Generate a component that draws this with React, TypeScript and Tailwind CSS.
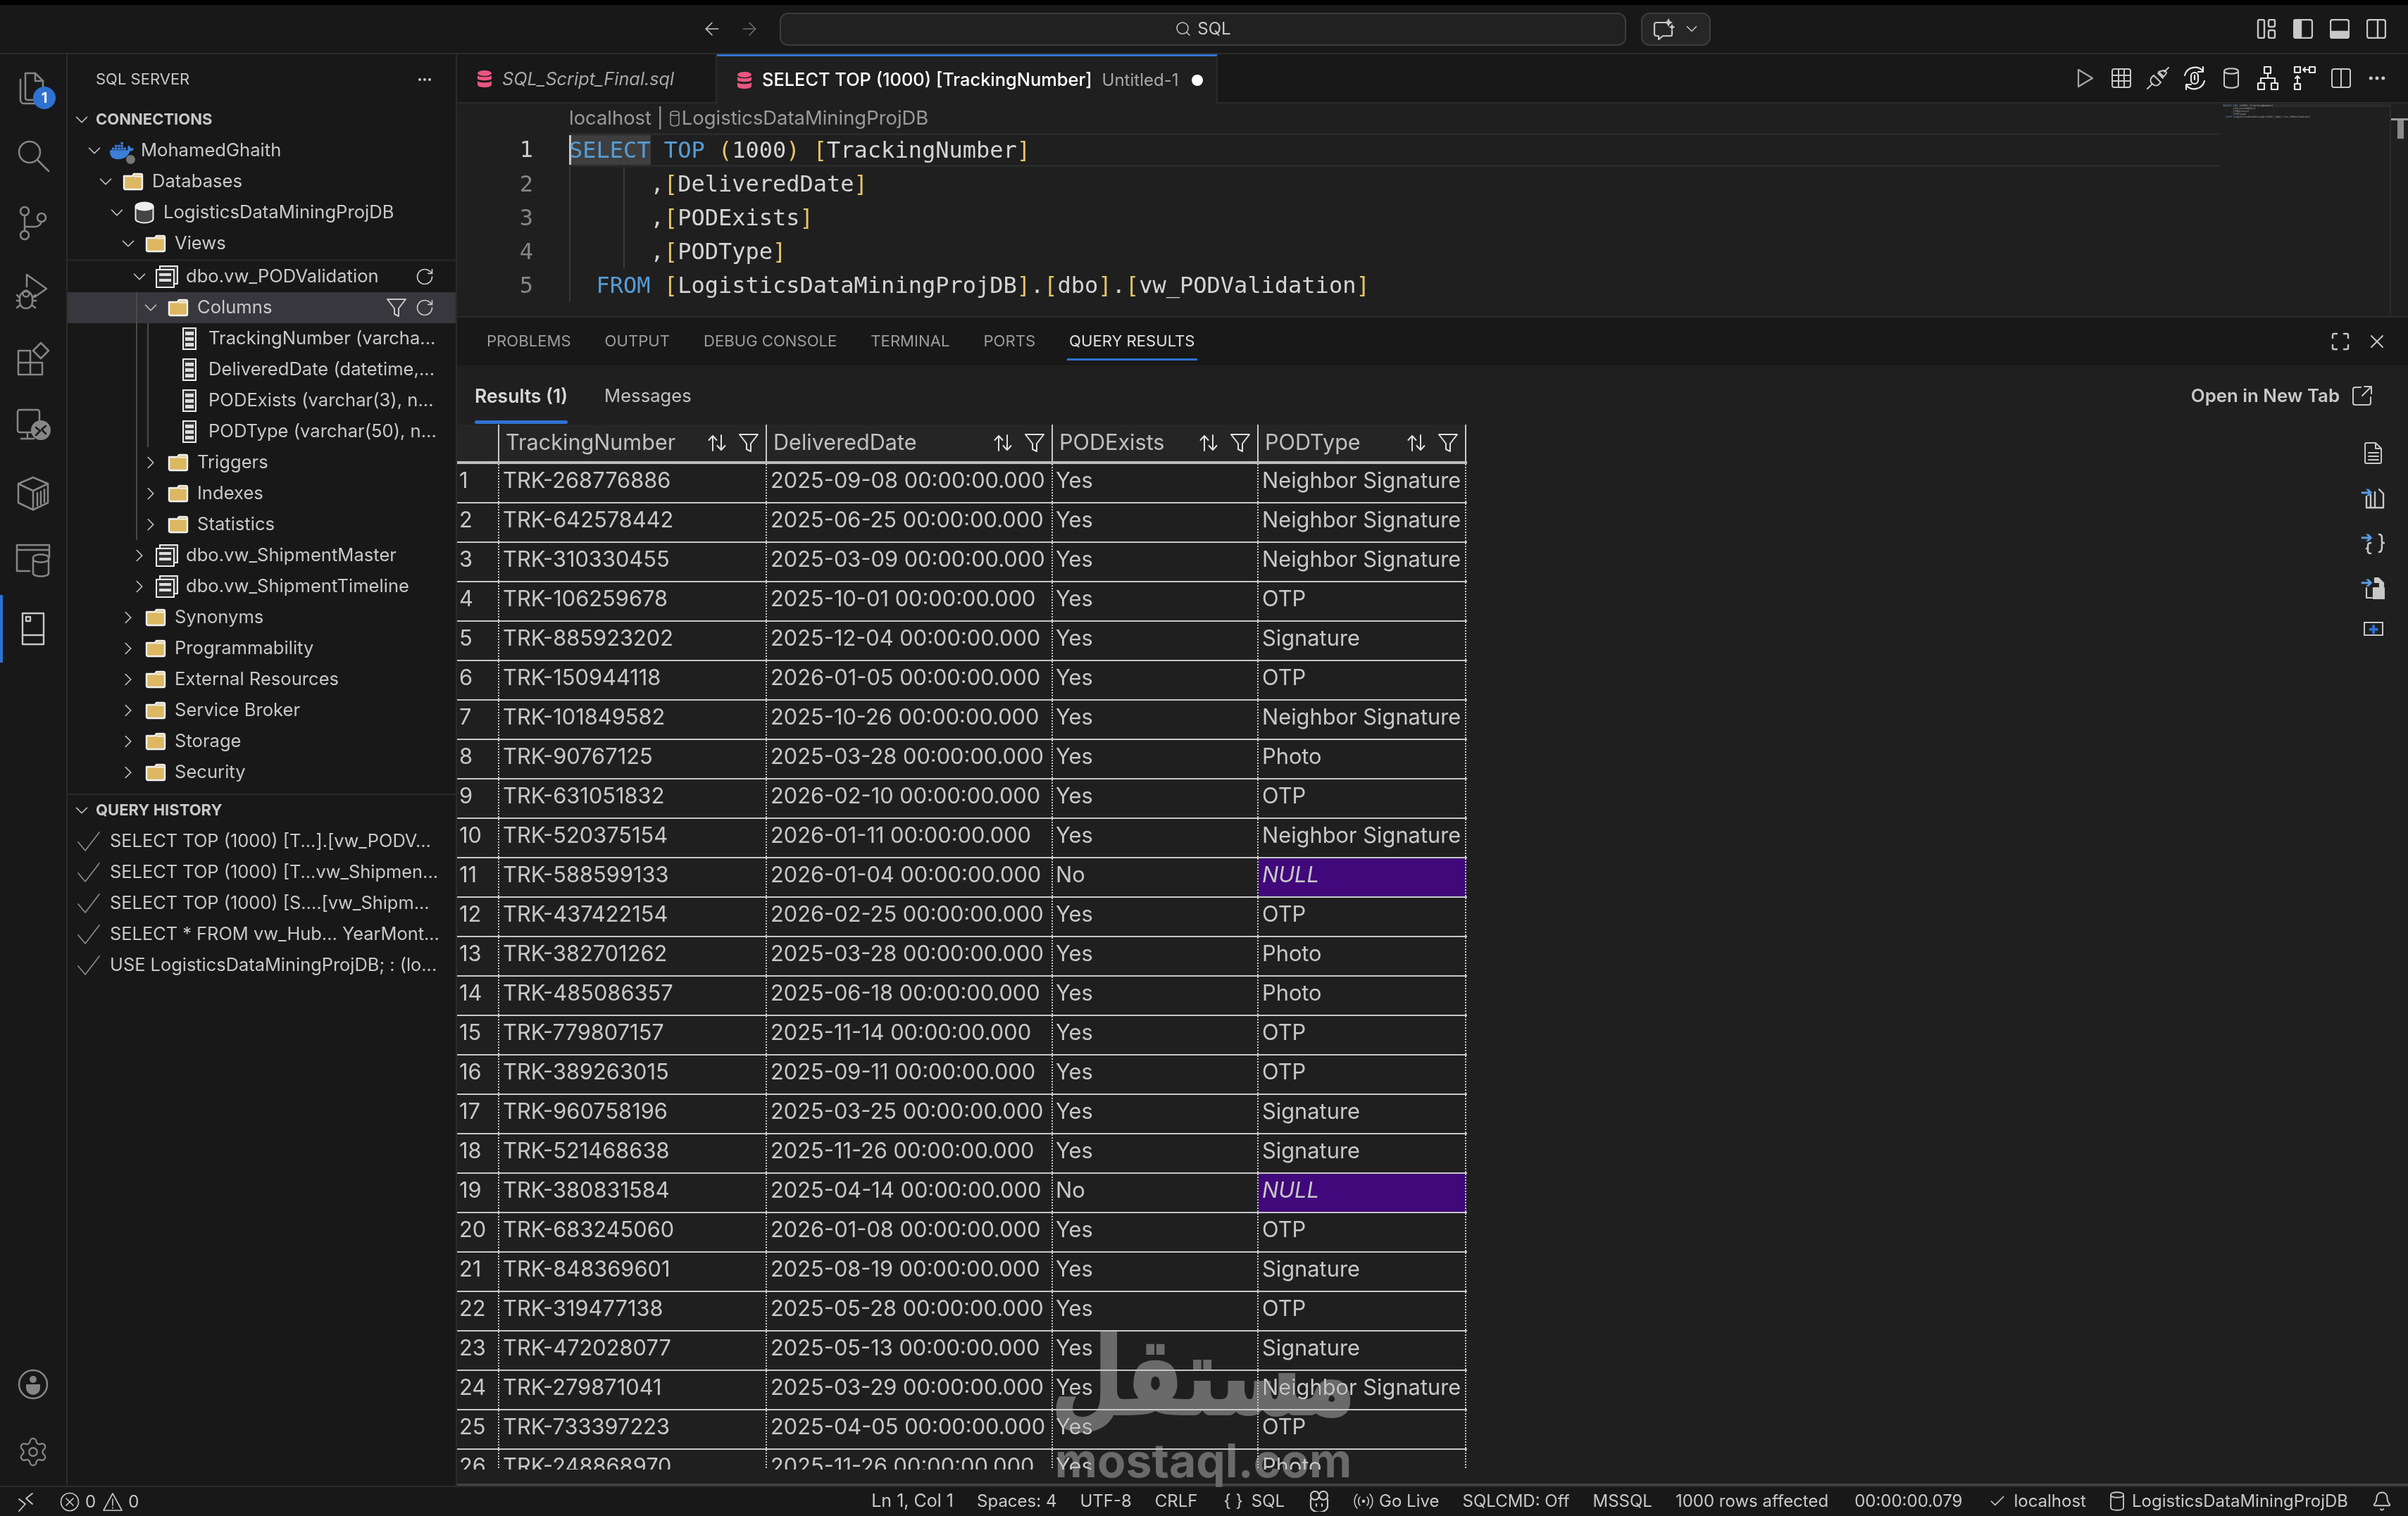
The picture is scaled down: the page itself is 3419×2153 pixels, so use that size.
import { ChevronDown, ChevronRight, Check, X, MoreHorizontal, ArrowLeft, ArrowRight, Search, RotateCw, Bell, Settings } from "lucide-react";
import { SiDocker } from "react-icons/si";
import type { ReactNode } from "react";

function Svg({
  w = 28,
  h = 28,
  vb,
  sw = 2.4,
  className = "",
  children,
}: {
  w?: number;
  h?: number;
  vb?: string;
  sw?: number;
  className?: string;
  children: ReactNode;
}) {
  return (
    <svg
      width={w}
      height={h}
      viewBox={vb ?? `0 0 ${w} ${h}`}
      fill="none"
      stroke="currentColor"
      strokeWidth={sw}
      strokeLinecap="round"
      strokeLinejoin="round"
      className={`shrink-0 ${className}`}
    >
      {children}
    </svg>
  );
}

function Funnel({ size = 28 }: { size?: number }) {
  return (
    <Svg w={size} h={size} vb="0 0 28 28" sw={2}>
      <path d="M1 2h26L17 15v11l-6-3v-8Z" />
    </Svg>
  );
}

function SortIcon() {
  return (
    <Svg w={26} h={26} sw={2}>
      <path d="M7 24V3M1.5 9 7 3l5.5 6M19 2v21M13.5 17l5.5 6 5.5-6" />
    </Svg>
  );
}

function Folder() {
  return (
    <svg width="30" height="26" viewBox="0 0 30 26" className="shrink-0">
      <path d="M2 5h12l2-3h10a2 2 0 0 1 2 2v18a2 2 0 0 1-2 2H4a2 2 0 0 1-2-2Z" fill="#dcb862" stroke="#f2f2f2" strokeWidth="2.4" strokeLinejoin="round" />
      <path d="M16 5.5h11" stroke="#f2f2f2" strokeWidth="2" />
    </svg>
  );
}

function DbIcon() {
  return (
    <svg width="28" height="32" viewBox="0 0 28 32" className="shrink-0">
      <path d="M1.5 7v18c0 3 5.5 5.5 12.5 5.5S26.500 28 26.500 25V7" fill="#444" stroke="#f0f0f0" strokeWidth="2" />
      <ellipse cx="14" cy="7" rx="12.500" ry="5.500" fill="#eee" stroke="#f0f0f0" strokeWidth="2" />
    </svg>
  );
}

function ViewIcon() {
  return (
    <svg width="32" height="32" viewBox="0 0 32 32" fill="none" className="shrink-0">
      <rect x="6" y="1" width="25" height="25" fill="#444" stroke="#eee" strokeWidth="2" />
      <rect x="1" y="6" width="25" height="25" fill="#2a2a2a" stroke="#eee" strokeWidth="2" />
      <rect x="5" y="11" width="17" height="4" fill="#ddd" />
      <rect x="5" y="19" width="17" height="4" fill="#ddd" />
      <rect x="5" y="15" width="17" height="4" fill="#333" />
    </svg>
  );
}

function ColumnIcon() {
  return (
    <svg width="20" height="32" viewBox="0 0 20 32" className="shrink-0">
      <rect x="1" y="1" width="18" height="30" fill="#333" stroke="#f0f0f0" strokeWidth="2" />
      <rect x="4" y="6" width="12" height="5" fill="#ddd" />
      <rect x="4" y="14" width="12" height="5" fill="#ddd" />
      <rect x="4" y="22" width="12" height="5" fill="#ddd" />
    </svg>
  );
}

function Whale() {
  return (
    <span className="relative flex h-[32px] w-[34px] shrink-0 items-center justify-center">
      <SiDocker size={34} className="text-[#3b7fd9]" />
      <span className="absolute bottom-[-3px] right-[-2px] h-[13px] w-[13px] rounded-full bg-[#777]" />
    </span>
  );
}

type Row = {
  label: string;
  level: number;
  open?: boolean;
  icon: ReactNode;
  actions?: "refresh" | "both";
  g1?: boolean;
  g2?: boolean;
};

const sticky: Row[] = [
  { label: "MohamedGhaith", level: 0, open: true, icon: <Whale /> },
  { label: "Databases", level: 1, open: true, icon: <Folder /> },
  { label: "LogisticsDataMiningProjDB", level: 2, open: true, icon: <DbIcon /> },
  { label: "Views", level: 3, open: true, icon: <Folder /> },
];

const treeRows: Row[] = [
  { label: "dbo.vw_PODValidation", level: 4, open: true, icon: <ViewIcon />, actions: "refresh" },
  { label: "Columns", level: 5, open: true, icon: <Folder />, actions: "both", g1: true },
  { label: "TrackingNumber (varcha...", level: 6, icon: <ColumnIcon />, g1: true, g2: true },
  { label: "DeliveredDate (datetime,...", level: 6, icon: <ColumnIcon />, g1: true, g2: true },
  { label: "PODExists (varchar(3), n...", level: 6, icon: <ColumnIcon />, g1: true, g2: true },
  { label: "PODType (varchar(50), n...", level: 6, icon: <ColumnIcon />, g1: true, g2: true },
  { label: "Triggers", level: 5, open: false, icon: <Folder />, g1: true },
  { label: "Indexes", level: 5, open: false, icon: <Folder />, g1: true },
  { label: "Statistics", level: 5, open: false, icon: <Folder />, g1: true },
  { label: "dbo.vw_ShipmentMaster", level: 4, open: false, icon: <ViewIcon /> },
  { label: "dbo.vw_ShipmentTimeline", level: 4, open: false, icon: <ViewIcon /> },
  { label: "Synonyms", level: 3, open: false, icon: <Folder /> },
  { label: "Programmability", level: 3, open: false, icon: <Folder /> },
  { label: "External Resources", level: 3, open: false, icon: <Folder /> },
  { label: "Service Broker", level: 3, open: false, icon: <Folder /> },
  { label: "Storage", level: 3, open: false, icon: <Folder /> },
  { label: "Security", level: 3, open: false, icon: <Folder /> },
];

const history = [
  "SELECT TOP (1000) [T...].[vw_PODV...",
  "SELECT TOP (1000) [T...vw_Shipmen...",
  "SELECT TOP (1000) [S....[vw_Shipm...",
  "SELECT * FROM vw_Hub... YearMont...",
  "USE LogisticsDataMiningProjDB; : (lo...",
];

function TreeRow({ row }: { row: Row }) {
  return (
    <div
      className={`relative flex h-[44px] items-center text-[25.6px] text-[#c8c8c8] ${row.label === "Columns" ? "bg-[#37373d]" : ""}`}
      style={{ paddingLeft: 22 + 16 * row.level }}
    >
      {row.g1 && <span className="absolute bottom-0 left-[97px] top-0 w-[2px] bg-[#4a4a4a]" />}
      {row.g2 && <span className="absolute bottom-0 left-[113px] top-0 w-[2px] bg-[#4a4a4a]" />}
      <span className="flex w-[32px] shrink-0 justify-center text-[#c8c8c8]">
        {row.open === true && <ChevronDown size={30} strokeWidth={1.3} />}
        {row.open === false && <ChevronRight size={30} strokeWidth={1.3} />}
      </span>
      <span className="flex w-[46px] shrink-0 justify-center">{row.icon}</span>
      <span className="ml-[4px] whitespace-nowrap pb-[1px]">{row.label}</span>
      {row.actions && (
        <span className="absolute right-[30px] flex items-center gap-[12px] text-[#c8c8c8]">
          {row.actions === "both" && <Funnel />}
          <RotateCw size={28} strokeWidth={1.4} />
        </span>
      )}
    </div>
  );
}

function SectionHeader({ label }: { label: string }) {
  return (
    <div className="flex h-[44px] items-center pl-[4px] text-[22px] font-bold text-[#c8c8c8]">
      <span className="flex w-[32px] justify-center">
        <ChevronDown size={30} strokeWidth={1.3} />
      </span>
      <span className="ml-[4px] pb-[1px]">{label}</span>
    </div>
  );
}

const activityTop: ReactNode[] = [
  <span className="relative block h-[52px] w-[48px]">
    <Svg w={48} h={52} sw={2.5}>
      <path d="M13 5h14l11 11v24a3 3 0 0 1-3 3H16a3 3 0 0 1-3-3Z" />
      <path d="M27 5v11h11M6 14v29a5 5 0 0 0 5 5h20" />
    </Svg>
    <span className="absolute left-[24px] top-[24px] flex h-[32px] w-[32px] items-center justify-center rounded-full bg-[#2f72d2] text-[20px] font-bold text-white">1</span>
  </span>,
  <Svg w={48} h={48} sw={2.5}>
    <circle cx="19" cy="19" r="15" />
    <path d="M30 30l16 16" />
  </Svg>,
  <Svg w={48} h={52} sw={2.5}>
    <circle cx="12" cy="9" r="6" />
    <circle cx="12" cy="43" r="6" />
    <circle cx="36" cy="18" r="6" />
    <path d="M12 15v22M12 31h14a10 10 0 0 0 10-7" />
  </Svg>,
  <Svg w={48} h={52} sw={2.5}>
    <path d="M15 20V3l28 20-17 12" />
    <circle cx="14" cy="30" r="4.500" />
    <path d="M5 36a9 9 0 0 1 18 0v6a9 9 0 0 1-18 0ZM1 32l4 4M27 32l-4 4M0 40h5M23 40h5M1 50l5-4M27 50l-5-4" />
  </Svg>,
  <Svg w={48} h={50} sw={2.5}>
    <path d="M3 14h17v17H3zM3 31h17v17H3zM20 31h17v17H20z" />
    <path d="M35 3l11 11-11 11-11-11Z" />
  </Svg>,
  <Svg w={50} h={52} sw={2.5}>
    <path d="M34 28V6a3 3 0 0 0-3-3H6a3 3 0 0 0-3 3v26a3 3 0 0 0 3 3h18M17 35v8M8 44h18" />
    <circle cx="36" cy="32" r="14" fill="#868686" stroke="none" />
    <path d="M29 28l6 5-6 6M43 26l-6 5 6 6" stroke="#181818" />
  </Svg>,
  <Svg w={48} h={50} sw={2.5}>
    <path d="M24 2l21 9v27L24 48 3 38V11Z" />
    <path d="M3 11l21 10 21-10M24 21v27M30 24v18M35 22v18M40 19v18" />
  </Svg>,
  <Svg w={50} h={50} sw={2.6}>
    <path d="M2 2h46v17M2 9h46M2 2v37h18" />
    <path d="M25 20v22c0 6 22 6 22 0V20c0-6-22-6-22 0ZM25 22c0 6 22 6 22 0" />
  </Svg>,
  <Svg w={34} h={48} sw={2.4} className="text-[#c8c8c8]">
    <rect x="2" y="2" width="30" height="44" />
    <path d="M2 33h30" />
    <rect x="7" y="7" width="6" height="6" />
  </Svg>,
];

function ActivityBar() {
  return (
    <div className="flex w-[96px] shrink-0 flex-col justify-between border-r-2 border-[#2b2b2b] text-[#868686]">
      <div className="flex flex-col">
        {activityTop.map((icon, i) => (
          <div key={i} className="relative flex h-[96px] items-center justify-center">
            {i === 8 && <span className="absolute bottom-0 left-0 top-0 w-[4px] bg-[#2f72d2]" />}
            {icon}
          </div>
        ))}
      </div>
      <div className="flex flex-col">
        <div className="flex h-[96px] items-center justify-center">
          <Svg w={44} h={44} sw={2.5}>
            <circle cx="22" cy="22" r="20" />
            <circle cx="22" cy="15" r="5" fill="currentColor" stroke="none" />
            <path d="M12 22h20v5a10 10 0 0 1-20 0Z" fill="currentColor" stroke="none" />
          </Svg>
        </div>
        <div className="flex h-[96px] items-center justify-center">
          <Settings size={46} strokeWidth={1.2} />
        </div>
      </div>
    </div>
  );
}

function Sidebar() {
  return (
    <div className="flex w-[553px] shrink-0 flex-col border-r-2 border-[#2b2b2b]">
      <div className="flex h-[71px] items-center justify-between pl-[40px] pr-[32px]">
        <span className="text-[22px] text-[#c8c8c8]">SQL SERVER</span>
        <MoreHorizontal size={24} className="text-[#c8c8c8]" />
      </div>
      <SectionHeader label="CONNECTIONS" />
      {sticky.map((r) => (
        <TreeRow key={r.label} row={r} />
      ))}
      <div className="h-[3px] bg-[#242424]" />
      {treeRows.map((r) => (
        <TreeRow key={r.label} row={r} />
      ))}
      <div className="mt-[8px] border-t-2 border-[#2b2b2b]">
        <SectionHeader label="QUERY HISTORY" />
      </div>
      {history.map((q) => (
        <div key={q} className="flex h-[44px] items-center pl-[12px] text-[25.4px] text-[#c8c8c8]">
          <span className="flex w-[36px] justify-center text-[#868686]">
            <Svg w={34} h={30} sw={1.8}>
              <path d="M2 16l10 12L32 2" />
            </Svg>
          </span>
          <span className="ml-[12px] whitespace-nowrap pb-[1px]">{q}</span>
        </div>
      ))}
    </div>
  );
}

function TitleBar() {
  return (
    <div className="flex h-[70px] shrink-0 items-center border-b-2 border-[#2b2b2b] bg-[#181818]">
      <div className="flex w-[1107px] shrink-0 items-center justify-end gap-[23px] pr-[28px]">
        <ArrowLeft size={30} strokeWidth={1.3} className="text-[#c8c8c8]" />
        <ArrowRight size={30} strokeWidth={1.3} className="text-[#6e6e6e]" />
      </div>
      <div className="flex h-[47px] w-[1202px] shrink-0 items-center justify-center gap-[8px] rounded-[12px] border-2 border-[#3c3c3c] bg-[#212121] text-[24px] text-[#c8c8c8]">
        <Search size={24} strokeWidth={1.4} />
        <span>SQL</span>
      </div>
      <div className="ml-[21px] flex h-[47px] w-[99px] shrink-0 items-center justify-between rounded-[12px] border-2 border-[#3c3c3c] bg-[#262626] pl-[14px] pr-[12px] text-[#c8c8c8]">
        <Svg w={34} h={32} sw={2.2}>
          <path d="M22 7H6a3 3 0 0 0-3 3v13a3 3 0 0 0 3 3h3v5l6-5h11a2 2 0 0 0 2-2v-6" />
          <path d="M23 1l2 4 4 2-4 2-2 4-2-4-4-2 4-2ZM28 9l1.500 3 3 1.500-3 1.500-1.500 3-1.500-3-3-1.500 3-1.500Z" fill="currentColor" stroke="none" />
        </Svg>
        <ChevronDown size={26} strokeWidth={1.4} />
      </div>
      <div className="flex flex-1 items-center justify-end gap-[24px] pr-[31px] text-[#c8c8c8]">
        <Svg>
          <rect x="2" y="1" width="9" height="26" rx="2" />
          <rect x="17" y="1" width="9" height="10" rx="2" />
          <rect x="17" y="16" width="9" height="11" rx="2" />
        </Svg>
        <Svg>
          <rect x="1" y="1" width="26" height="26" rx="3" />
          <path d="M4 1h7v26H4a3 3 0 0 1-3-3V4a3 3 0 0 1 3-3Z" fill="currentColor" />
        </Svg>
        <Svg>
          <rect x="1" y="1" width="26" height="26" rx="3" />
          <path d="M1 18h26v6a3 3 0 0 1-3 3H4a3 3 0 0 1-3-3Z" fill="currentColor" />
        </Svg>
        <Svg>
          <rect x="1" y="1" width="26" height="26" rx="3" />
          <path d="M16 1v26" />
        </Svg>
      </div>
    </div>
  );
}

function TabDb() {
  return (
    <svg width="22" height="24" viewBox="0 0 22 24" className="shrink-0">
      <ellipse cx="11" cy="4" rx="10" ry="4" fill="#e8567f" />
      <path d="M1 7c2 3 18 3 20 0v5c-2 3-18 3-20 0ZM1 15c2 3 18 3 20 0v5c0 3-5 4-10 4S1 23 1 20Z" fill="#e8567f" />
    </svg>
  );
}

function TabBar() {
  return (
    <div className="flex h-[70px] shrink-0 border-b-2 border-[#2b2b2b] bg-[#181818]">
      <div className="-mb-[2px] flex w-[369px] shrink-0 items-center border-r-2 border-[#2b2b2b] pl-[28px] pr-[10px]">
        <TabDb />
        <span className="ml-[14px] whitespace-nowrap text-[25.3px] italic text-[#a8a8a8]">SQL_Script_Final.sql</span>
      </div>
      <div className="-mb-[2px] flex w-[711px] shrink-0 items-center border-r-2 border-t-[3px] border-[#2b2b2b] border-t-[#2f72d2] bg-[#1f1f1f] pl-[28px]">
        <TabDb />
        <span className="ml-[14px] whitespace-nowrap text-[25.4px] font-medium text-white">SELECT TOP (1000) [TrackingNumber]</span>
        <span className="ml-[14px] whitespace-nowrap text-[24px] text-[#a8a8a8]">Untitled-1</span>
        <span className="ml-[19px] h-[16px] w-[16px] rounded-full bg-white" />
      </div>
      <div className="flex flex-1 items-center justify-end gap-[20px] pr-[29px] text-[#c8c8c8]">
        <Svg w={32} h={32} sw={2.2} className="text-[#a8a8a8]">
          <path d="M7 4l20 12L7 28Z" />
        </Svg>
        <Svg w={32} h={32} sw={2}>
          <rect x="3" y="3" width="26" height="26" rx="3" />
          <path d="M3 12h26M3 20h26M12 3v26M20 3v26" />
        </Svg>
        <Svg w={32} h={32} sw={2}>
          <path d="M1 31l7-7M31 1l-6 6M10 12l10 10-3 3a6 6 0 0 1-8 0l-2-2a6 6 0 0 1 0-8ZM16 9l7 7M24 5a4 4 0 0 1 4 4l-4 5-7-7Z" />
        </Svg>
        <Svg w={32} h={36} sw={2.2} className="text-[#e8e8e8]">
          <path d="M2 14A15 15 0 0 1 28 8M30 22A15 15 0 0 1 4 28M28 2v7h-7M4 34v-7h7" />
          <rect x="11" y="10" width="10" height="16" rx="5" />
          <path d="M16 14v6" />
        </Svg>
        <Svg w={32} h={32} sw={2}>
          <path d="M6 6v20c0 5 20 5 20 0V6M6 6c0-5 20-5 20 0s-20 5-20 0Z" />
        </Svg>
        <Svg w={32} h={36} sw={2.2} className="text-[#e8e8e8]">
          <rect x="11" y="2" width="9" height="9" />
          <rect x="2" y="25" width="9" height="9" />
          <rect x="21" y="25" width="9" height="9" />
          <path d="M16 11v7M6 25v-7h20v7" />
        </Svg>
        <Svg w={32} h={36} sw={2.2} className="text-[#e8e8e8]">
          <rect x="2" y="2" width="8" height="8" />
          <rect x="23" y="2" width="8" height="8" />
          <rect x="2" y="26" width="8" height="8" />
          <path d="M22 6h-8M17 3l-3 3 3 3M6 26V16M3 18l3-3 3 3" />
        </Svg>
        <Svg w={32} h={32} sw={2}>
          <rect x="3" y="3" width="26" height="26" rx="3" />
          <path d="M16 3v26" />
        </Svg>
        <MoreHorizontal size={30} strokeWidth={2} className="shrink-0 text-[#c8c8c8]" />
      </div>
    </div>
  );
}

function Code({ children, current = false }: { children: ReactNode; current?: boolean }) {
  return (
    <div className={`h-[48px] whitespace-pre ${current ? "border-y-[3px] border-[#2a2a2a] leading-[42px]" : "leading-[48px]"}`}>
      {children}
    </div>
  );
}

const B = ({ children }: { children: ReactNode }) => <span className="text-[#e6c468]">{children}</span>;
const K = ({ children }: { children: ReactNode }) => <span className="text-[#569cd6]">{children}</span>;

function Editor() {
  return (
    <div className="flex h-[302px] shrink-0 bg-[#1f1f1f] [font-family:'DejaVu_Sans_Mono',monospace]">
      <div className="w-[159px] shrink-0 pr-[51px] pt-[42px] text-right text-[32px] text-[#858585]">
        <div className="h-[48px] leading-[46px] text-[#cccccc]">1</div>
        <div className="h-[48px] leading-[48px]">2</div>
        <div className="h-[48px] leading-[48px]">3</div>
        <div className="h-[48px] leading-[48px]">4</div>
        <div className="h-[48px] leading-[48px]">5</div>
      </div>
      <div className="w-[2344px] shrink-0">
        <div className="flex h-[42px] items-center text-[27.4px] text-[#9a9a9a] [font-family:Inter,sans-serif]">
          <span>localhost |</span>
          <Svg w={16} h={24} sw={1.5} className="ml-[8px] mr-[2px]">
            <path d="M2 5v14c0 5 12 5 12 0V5M2 5c0-4 12-4 12 0s-12 4-12 0Z" />
          </Svg>
          <span>LogisticsDataMiningProjDB</span>
        </div>
        <div className="relative text-[32px] text-[#d4d4d4]">
          <span className="absolute left-0 top-0 h-[48px] w-[116px] bg-[#3e3e3e]" />
          <span className="absolute left-0 top-0 h-[48px] w-[3px] bg-[#c8c8c8]" />
          <span className="absolute left-0 top-[48px] h-[192px] w-[2px] bg-[#3a3a3a]" />
          <span className="absolute left-[77px] top-[48px] h-[144px] w-[2px] bg-[#3a3a3a]" />
          <div className="relative">
            <Code current>
              <K>SELECT</K> <K>TOP</K> <B>(</B>1000<B>)</B> <B>[</B>TrackingNumber<B>]</B>
            </Code>
            <Code>
              {"      ,"}
              <B>[</B>DeliveredDate<B>]</B>
            </Code>
            <Code>
              {"      ,"}
              <B>[</B>PODExists<B>]</B>
            </Code>
            <Code>
              {"      ,"}
              <B>[</B>PODType<B>]</B>
            </Code>
            <Code>
              {"  "}
              <K>FROM</K> <B>[</B>LogisticsDataMiningProjDB<B>]</B>.<B>[</B>dbo<B>]</B>.<B>[</B>vw_PODValidation<B>]</B>
            </Code>
          </div>
        </div>
      </div>
      <div className="w-[241px] shrink-0 whitespace-pre pl-[4px] pt-[1px] text-[3.500px] leading-[4px] text-[#a8a8a8]">
        <div className="bg-[#2a2a2a]">
          <span className="text-[#569cd6]">SELECT TOP</span> (1000) [TrackingNumber]
        </div>
        <div>{"      ,[DeliveredDate]"}</div>
        <div>{"      ,[PODExists]"}</div>
        <div>{"      ,[PODType]"}</div>
        <div>
          {"  "}
          <span className="text-[#569cd6]">FROM</span> [LogisticsDataMiningProjDB].[dbo].[vw_PODValidation]
        </div>
      </div>
      <div className="flex-1 border-l-2 border-[#2b2b2b]">
        <div className="mt-[21px] h-[3px] bg-[#9a9a9a]" />
        <div className="ml-[9px] h-[26px] w-[9px] bg-[#8a8a8a]" />
      </div>
    </div>
  );
}

type Pod = "Neighbor Signature" | "OTP" | "Signature" | "Photo" | "NULL";
const rows: [string, string, string, Pod][] = [
  ["TRK-268776886", "2025-09-08", "Yes", "Neighbor Signature"],
  ["TRK-642578442", "2025-06-25", "Yes", "Neighbor Signature"],
  ["TRK-310330455", "2025-03-09", "Yes", "Neighbor Signature"],
  ["TRK-106259678", "2025-10-01", "Yes", "OTP"],
  ["TRK-885923202", "2025-12-04", "Yes", "Signature"],
  ["TRK-150944118", "2026-01-05", "Yes", "OTP"],
  ["TRK-101849582", "2025-10-26", "Yes", "Neighbor Signature"],
  ["TRK-90767125", "2025-03-28", "Yes", "Photo"],
  ["TRK-631051832", "2026-02-10", "Yes", "OTP"],
  ["TRK-520375154", "2026-01-11", "Yes", "Neighbor Signature"],
  ["TRK-588599133", "2026-01-04", "No", "NULL"],
  ["TRK-437422154", "2026-02-25", "Yes", "OTP"],
  ["TRK-382701262", "2025-03-28", "Yes", "Photo"],
  ["TRK-485086357", "2025-06-18", "Yes", "Photo"],
  ["TRK-779807157", "2025-11-14", "Yes", "OTP"],
  ["TRK-389263015", "2025-09-11", "Yes", "OTP"],
  ["TRK-960758196", "2025-03-25", "Yes", "Signature"],
  ["TRK-521468638", "2025-11-26", "Yes", "Signature"],
  ["TRK-380831584", "2025-04-14", "No", "NULL"],
  ["TRK-683245060", "2026-01-08", "Yes", "OTP"],
  ["TRK-848369601", "2025-08-19", "Yes", "Signature"],
  ["TRK-319477138", "2025-05-28", "Yes", "OTP"],
  ["TRK-472028077", "2025-05-13", "Yes", "Signature"],
  ["TRK-279871041", "2025-03-29", "Yes", "Neighbor Signature"],
  ["TRK-733397223", "2025-04-05", "Yes", "OTP"],
  ["TRK-248868970", "2025-11-26", "Yes", "Photo"],
];

function HeaderCell({ label, width }: { label: string; width: string }) {
  return (
    <div className={`flex h-full shrink-0 items-center justify-between border-r-2 border-[#c8c8c8] pl-[9px] pr-[10px] ${width}`}>
      <span className="pb-[2px] text-[30.6px] text-[#c0c0c0]">{label}</span>
      <span className="flex items-center gap-[18px] text-[#e0e0e0]">
        <SortIcon />
        <Funnel />
      </span>
    </div>
  );
}

function ResultsTable() {
  return (
    <div className="h-[1484px] w-[1434px] shrink-0 overflow-hidden text-[30.8px] text-[#c8c8c8]">
      <div className="flex h-[56px] border-b-4 border-[#bdbdbd] bg-[#252526]">
        <div className="h-full w-[60px] shrink-0 border-r-2 border-[#c8c8c8]" />
        <HeaderCell label="TrackingNumber" width="w-[380px]" />
        <HeaderCell label="DeliveredDate" width="w-[406px]" />
        <HeaderCell label="PODExists" width="w-[292px]" />
        <HeaderCell label="PODType" width="w-[295px]" />
      </div>
      {rows.map((r, i) => (
        <div key={r[0]} className="flex h-[56px] items-stretch border-b-2 border-[#c8c8c8]">
          <div className="flex w-[60px] shrink-0 items-center border-r-2 border-dotted border-[#c8c8c8] pb-[7px] pl-[3px]">{i + 1}</div>
          <div className="flex w-[380px] shrink-0 items-center border-r-2 border-dotted border-[#c8c8c8] pb-[7px] pl-[5px]">{r[0]}</div>
          <div className="flex w-[406px] shrink-0 items-center border-r-2 border-dotted border-[#c8c8c8] pb-[7px] pl-[5px]">{r[1]} 00:00:00.000</div>
          <div className="flex w-[292px] shrink-0 items-center border-r-2 border-dotted border-[#c8c8c8] pb-[7px] pl-[4px]">{r[2]}</div>
          <div className={`flex w-[295px] shrink-0 items-center border-r-2 border-dotted border-[#c8c8c8] pb-[7px] pl-[5px] ${r[3] === "NULL" ? "bg-[#40087a] italic" : ""}`}>{r[3]}</div>
        </div>
      ))}
    </div>
  );
}

function SideActions() {
  return (
    <div className="ml-auto flex w-[98px] shrink-0 flex-col items-center gap-[32px] pt-[24px] text-[#c8c8c8]">
      <Svg w={32} h={32} sw={2}>
        <path d="M6 2h13l8 8v19a2 2 0 0 1-2 2H6a2 2 0 0 1-2-2V4a2 2 0 0 1 2-2ZM19 2v8h8M9 16h14M9 21h14M9 26h14" />
      </Svg>
      <span className="relative block h-[32px] w-[32px]">
        <Svg w={32} h={32} sw={2.4}>
          <path d="M6 30V14M12 30V12M18 30V8M24 4l6 6v20H6" />
        </Svg>
        <span className="absolute left-[-2px] top-[-2px] text-[20px] font-bold leading-[20px] text-[#5b9bdd]">➔</span>
      </span>
      <span className="relative block h-[32px] w-[32px]">
        <Svg w={32} h={32} sw={2.6}>
          <path d="M12 16c-4 0-4 2-4 5s1 3-2 3c3 0 2 1 2 3s0 4 4 4M24 4c4 0 4 3 4 7s-1 5 3 5c-4 0-3 2-3 5s0 8-4 8" />
        </Svg>
        <span className="absolute left-[-2px] top-[-2px] text-[20px] font-bold leading-[20px] text-[#5b9bdd]">➔</span>
      </span>
      <span className="relative block h-[32px] w-[32px]">
        <Svg w={32} h={32} sw={2.2}>
          <path d="M6 16v14h8" />
          <path d="M18 2h5l7 7v5h-5V8h-7Z" fill="currentColor" />
          <rect x="16" y="16" width="15" height="15" fill="currentColor" />
        </Svg>
        <span className="absolute left-[-2px] top-[-2px] text-[20px] font-bold leading-[20px] text-[#5b9bdd]">➔</span>
      </span>
      <span className="relative flex h-[20px] w-[28px] items-center justify-center border-2 border-[#c8c8c8] text-[#2f72d2]">
        <span className="text-[24px] font-black leading-[16px]">+</span>
      </span>
    </div>
  );
}

function Panel() {
  return (
    <div className="flex flex-1 flex-col border-t-2 border-[#2b2b2b] bg-[#1f1f1f]">
      <div className="flex h-[68px] shrink-0 items-center justify-between bg-[#181818] pl-[42px] pr-[28px] text-[22.1px] text-[#9d9d9d]">
        <div className="flex items-center gap-[48px]">
          <span>PROBLEMS</span>
          <span>OUTPUT</span>
          <span>DEBUG CONSOLE</span>
          <span>TERMINAL</span>
          <span>PORTS</span>
          <span className="relative text-[#e0e0e0]">
            QUERY RESULTS
            <span className="absolute bottom-[-10px] left-[-3px] right-[-3px] h-[3px] bg-[#2f72d2]" />
          </span>
        </div>
        <div className="flex items-center gap-[22px] text-[#c8c8c8]">
          <Svg>
            <path d="M9 3H5a2 2 0 0 0-2 2v4M19 3h4a2 2 0 0 1 2 2v4M3 19v4a2 2 0 0 0 2 2h4M25 19v4a2 2 0 0 1-2 2h-4" />
          </Svg>
          <X size={32} strokeWidth={1.4} />
        </div>
      </div>
      <div className="flex h-[84px] shrink-0 items-start justify-between pl-[25px] pr-[50px]">
        <div className="flex h-full gap-[52px]">
          <div className="flex h-full flex-col items-center justify-start pt-[24px]">
            <span className="text-[26.5px] font-semibold text-[#d8d8d8]">Results (1)</span>
            <span className="mb-[1px] mt-auto h-[5px] w-full rounded-[3px] bg-[#2f72d2]" />
          </div>
          <span className="pt-[24px] text-[25.6px] text-[#c0c0c0]">Messages</span>
        </div>
        <div className="flex items-center gap-[17px] pt-[24px] text-[25.8px] font-semibold text-[#c8c8c8]">
          <span>Open in New Tab</span>
          <Svg w={30} h={30} sw={2}>
            <path d="M13 3H5a3 3 0 0 0-3 3v19a3 3 0 0 0 3 3h19a3 3 0 0 0 3-3v-8M18 2h10v10M28 2 15 15" />
          </Svg>
        </div>
      </div>
      <div className="flex flex-1 items-start overflow-hidden">
        <ResultsTable />
        <SideActions />
      </div>
      <div className="h-[3px] shrink-0 bg-[#444]" />
    </div>
  );
}

function StatusBar() {
  return (
    <div className="flex h-[43px] shrink-0 items-center justify-between whitespace-nowrap border-t-2 border-[#2b2b2b] bg-[#181818] pl-[24px] pr-[22px] text-[24px] text-[#c8c8c8]">
      <div className="flex items-center">
        <Svg w={26} h={28} sw={1.8}>
          <path d="M3 10l9 7-9 10M22 2l-9 7 9 8" />
        </Svg>
        <span className="ml-[35px] flex items-center gap-[8px]">
          <Svg w={28} h={28} sw={1.6}>
            <circle cx="14" cy="14" r="12.500" />
            <path d="M9 9l10 10M19 9 9 19" />
          </Svg>
          0
          <Svg w={28} h={28} sw={1.6} className="ml-[2px]">
            <path d="M14 2 27 26H1ZM14 10v9M14 22v1" />
          </Svg>
          0
        </span>
      </div>
      <div className="flex items-center gap-[33px] pb-[2px]">
        <span className="text-[25px]">Ln 1, Col 1</span>
        <span>Spaces: 4</span>
        <span>UTF-8</span>
        <span>CRLF</span>
        <span className="ml-[4px] flex items-center gap-[12px]">
          <span>{"{ }"}</span>
          SQL
        </span>
        <Svg w={32} h={30} sw={2.2}>
          <circle cx="10" cy="7" r="6" />
          <circle cx="22" cy="7" r="6" />
          <path d="M4 12v10a11 8 0 0 0 24 0V12" />
          <path d="M12 19v3M20 19v3" />
        </Svg>
        <span className="flex items-center gap-[8px]">
          <Svg w={28} h={26} sw={1.6}>
            <circle cx="14" cy="13" r="1.500" fill="currentColor" />
            <path d="M9 7a9 9 0 0 0 0 12M19 7a9 9 0 0 1 0 12M5 3a15 15 0 0 0 0 20M23 3a15 15 0 0 1 0 20" />
          </Svg>
          Go Live
        </span>
        <span>SQLCMD: Off</span>
        <span>MSSQL</span>
        <span className="mr-[4px]">1000 rows affected</span>
        <span>00:00:00.079</span>
        <span className="ml-[4px] flex items-center gap-[10px]">
          <Check size={26} strokeWidth={1.5} />
          localhost
        </span>
        <span className="flex items-center gap-[10px]">
          <Svg w={22} h={30} sw={1.8}>
            <path d="M2 6v18c0 5 18 5 18 0V6M2 6c0-5 18-5 18 0s-18 5-18 0Z" />
          </Svg>
          LogisticsDataMiningProjDB
        </span>
        <Bell size={30} strokeWidth={1.5} />
      </div>
    </div>
  );
}

export default function App() {
  return (
    <div className="relative flex h-screen w-screen flex-col overflow-hidden bg-[#181818] [font-family:Inter,sans-serif]">
      <div className="h-[7px] shrink-0 bg-black" />
      <TitleBar />
      <div className="flex min-h-0 flex-1">
        <ActivityBar />
        <Sidebar />
        <div className="flex min-w-0 flex-1 flex-col">
          <TabBar />
          <Editor />
          <Panel />
        </div>
      </div>
      <StatusBar />
      <div className="pointer-events-none absolute left-[1505px] top-[1908px] flex w-[407px] flex-col items-center font-bold text-[#6a6a6a] mix-blend-lighten">
        <span dir="rtl" className="origin-bottom scale-y-[1.3] text-[118px] leading-[134px] [-webkit-text-stroke:3px_#6a6a6a] [font-family:'DejaVu_Sans',sans-serif]">مستقل</span>
        <span className="text-[66px] leading-[64px] [font-family:Inter,sans-serif]">mostaql.com</span>
      </div>
    </div>
  );
}
